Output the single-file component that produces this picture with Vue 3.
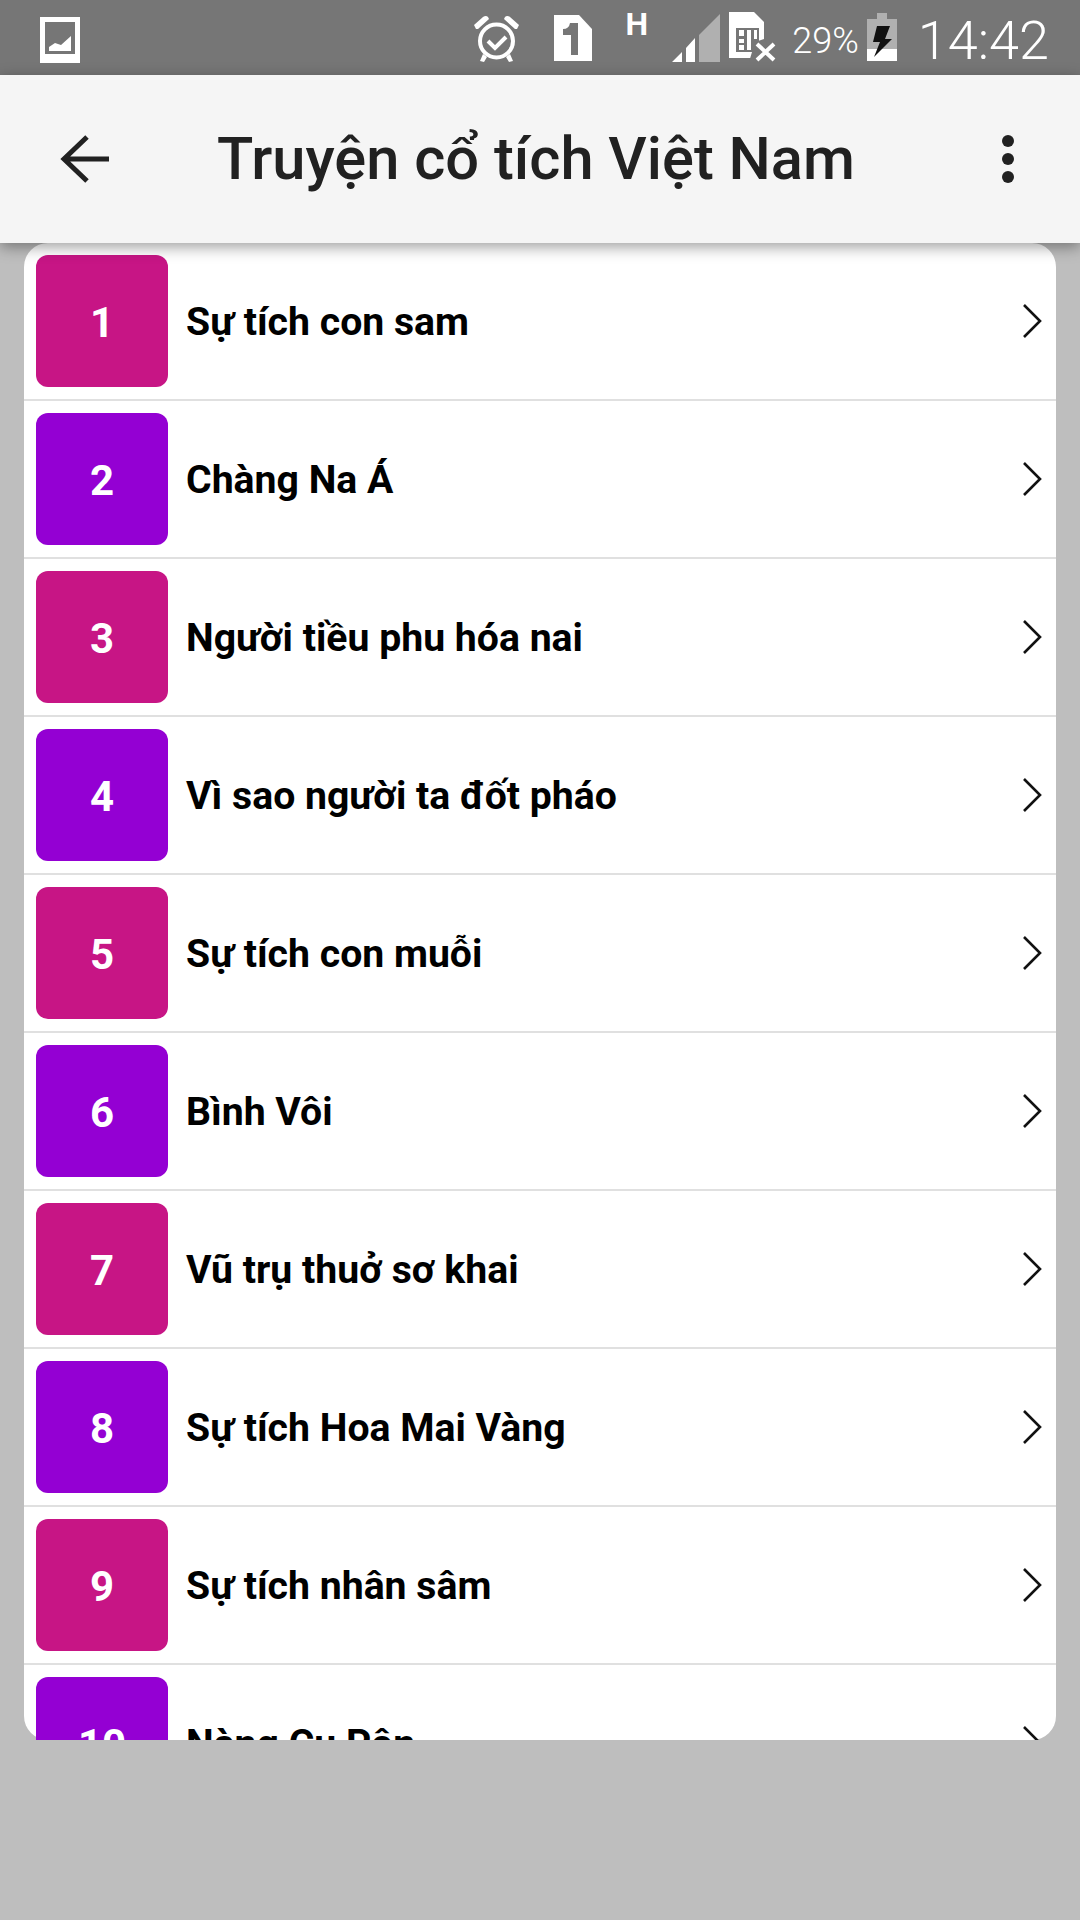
<script setup>
const stories = [
  'Sự tích con sam',
  'Chàng Na Á',
  'Người tiều phu hóa nai',
  'Vì sao người ta đốt pháo',
  'Sự tích con muỗi',
  'Bình Vôi',
  'Vũ trụ thuở sơ khai',
  'Sự tích Hoa Mai Vàng',
  'Sự tích nhân sâm',
  'Nàng Cu Pôn'
]
</script>

<template>
  <div class="screen">
    <div class="status">
      <svg class="ic-photo" width="40" height="46" viewBox="0 0 40 46">
        <path fill="#fff" fill-rule="evenodd" d="M0 0h40v46H0zM5 5v32h30V5z" />
        <path fill="#fff" d="M9 34v-4l6-4 6 2 10-9v15z" />
      </svg>
      <div class="spacer"></div>
      <svg class="ic-alarm" width="46" height="48" viewBox="0 0 46 48">
        <circle cx="22.5" cy="26" r="16.5" fill="none" stroke="#fff" stroke-width="4" />
        <path fill="#fff" d="M0 10 9 2q3-2 5 0l1 2L4 14H2zM45 10 36 2q-3-2-5 0l-1 2 11 10h2zM9 39l4 3-3 5-4-1zM36 39l-4 3 3 5 4-1z" />
        <path fill="none" stroke="#fff" stroke-width="4" d="m14 26 7 7 11-11" />
      </svg>
      <svg class="ic-sim" width="38" height="46" viewBox="0 0 38 46">
        <path fill="#fff" d="M0 0h25l13 14v32H0z" />
        <path fill="#767676" d="M16 8h8v32h-7V20H9v-6q6 0 7-6z" />
      </svg>
      <span class="net">H</span>
      <svg class="ic-signal" width="48" height="48" viewBox="0 0 48 48">
        <path fill="#fff" d="M0 48 10 38v10zM14 34l9-10v24h-9z" />
        <path fill="#b0b0b0" d="M27 21 48 0v48H27z" />
      </svg>
      <svg class="ic-simx" width="48" height="50" viewBox="0 0 48 50">
        <path fill="#fff" d="M0 0h25l10 10v36H0z" />
        <path fill="#767676" d="M7 16h23v24H7zM26 30l9-3 13 23H20z" />
        <path fill="#fff" d="M10 18h5v6h-5zM18 18h4v20h-4zM10 27h5v4h-5zM10 33h5v5h-5zM25 18h3v9h-3z" />
        <path fill="none" stroke="#fff" stroke-width="4" d="m28 32 17 16M45 32 28 48" />
      </svg>
      <span class="pct">29%</span>
      <svg class="ic-bat" width="30" height="48" viewBox="0 0 30 48">
        <path fill="#b0b0b0" d="M10 0h10v6h10v30H0V6h10z" />
        <path fill="#fff" d="M0 36h30v12H0z" />
        <path fill="#111" d="M10 13h13l-5 13h7L7 44l6-15H6z" />
      </svg>
      <span class="clock">14:42</span>
    </div>

    <header class="bar">
      <svg class="ic-back" width="50" height="50" viewBox="0 0 50 50">
        <path fill="none" stroke="#212121" stroke-width="5" d="M49 25H5M27 3 4 25l23 22" />
      </svg>
      <h1 class="title">Truyện cổ tích Việt Nam</h1>
      <svg class="ic-more" width="14" height="50" viewBox="0 0 14 50">
        <circle cx="7" cy="7" r="6" fill="#212121" />
        <circle cx="7" cy="25" r="6" fill="#212121" />
        <circle cx="7" cy="43" r="6" fill="#212121" />
      </svg>
    </header>

    <main class="card">
      <div class="rows">
        <div v-for="(name, i) in stories" :key="name" class="row">
          <div class="thumb" :class="i % 2 ? 'violet' : 'pink'">{{ i + 1 }}</div>
          <span class="name">{{ name }}</span>
          <svg class="chev" width="20" height="36" viewBox="0 0 20 36">
            <path fill="none" stroke="#111" stroke-width="2.6" d="M2 2l16 16L2 34" />
          </svg>
        </div>
      </div>
    </main>
  </div>
</template>

<style>
html, body { margin: 0; background: #bebebe; }
</style>

<style scoped>
.screen {
  width: 1080px;
  height: 1920px;
  background: #bebebe;
  font-family: Roboto, "Noto Sans", sans-serif;
  overflow: hidden;
  display: flex;
  flex-direction: column;
}
.status {
  height: 75px;
  flex: none;
  background: #767676;
  color: #fff;
  display: flex;
  align-items: flex-start;
  padding: 0 31px 0 40px;
  box-sizing: border-box;
}
.spacer { flex: 1; }
.ic-photo { margin-top: 17px; }
.ic-alarm { margin-top: 15px; }
.ic-sim { margin: 15px 0 0 34px; }
.net {
  font-weight: 700;
  font-size: 32px;
  line-height: 32px;
  width: 23px;
  margin: 8px 0 0 33px;
  text-align: center;
}
.ic-signal { margin: 14px 0 0 24px; }
.ic-simx { margin: 12px 0 0 9px; }
.pct {
  font-size: 36px;
  line-height: 36px;
  font-weight: 300;
  margin: 23px 0 0 15px;
}
.ic-bat { margin: 13px 0 0 8px; }
.clock {
  font-size: 54px;
  line-height: 54px;
  font-weight: 300;
  margin: 14px 0 0 21px;
}
.bar {
  height: 168px;
  flex: none;
  background: #f5f5f5;
  display: flex;
  align-items: center;
  padding: 0 65px 0 60px;
  box-sizing: border-box;
  position: relative;
  z-index: 2;
  box-shadow: 0 4px 14px rgba(0, 0, 0, 0.38);
}
.title {
  margin: 0 0 0 107px;
  flex: 1;
  font-size: 59.6px;
  font-weight: 500;
  color: #212121;
}
.card {
  height: 1497px;
  flex: none;
  margin: 0 24px;
  background: #fff;
  border-radius: 24px;
}
.rows {
  height: 100%;
  overflow: hidden;
}
.row {
  height: 158px;
  box-sizing: border-box;
  padding: 12px 14px 12px 12px;
  border-bottom: 2px solid #e0e0e0;
  display: flex;
  align-items: center;
}
.thumb {
  width: 132px;
  height: 132px;
  flex: none;
  border-radius: 12px;
  display: flex;
  align-items: center;
  justify-content: center;
  padding-top: 2px;
  box-sizing: border-box;
  color: #fff;
  font-size: 42px;
  font-weight: 700;
}
.pink { background: #c71585; }
.violet { background: #9400d3; }
.name {
  flex: 1;
  margin-left: 18px;
  padding-top: 2px;
  font-size: 39.2px;
  font-weight: 700;
  color: #000;
}
.chev { flex: none; }
</style>
